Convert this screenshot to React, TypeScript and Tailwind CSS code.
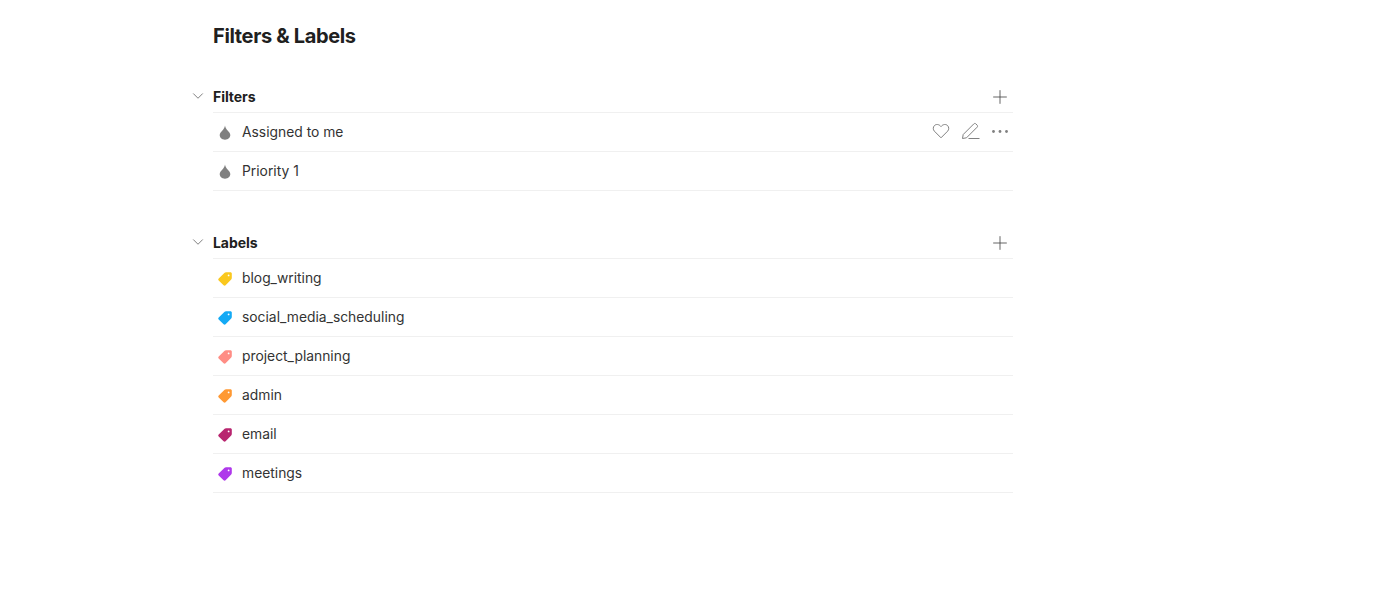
import { ChevronDown, Plus } from "lucide-react";

const labels = [
  { name: "blog_writing", color: "#fac81e" },
  { name: "social_media_scheduling", color: "#14aaf5" },
  { name: "project_planning", color: "#ff8d85" },
  { name: "admin", color: "#ff9933" },
  { name: "email", color: "#b8256f" },
  { name: "meetings", color: "#af38eb" },
];

function DropIcon() {
  return (
    <svg width="12" height="15" viewBox="0 0 12 15" fill="#808080" className="mt-[1px]">
      <path d="M6 0.5C6.3 2.6 7.4 4 8.6 5.5C9.7 6.9 11.3 8.2 11.3 10C11.3 12.7 9 14.7 6 14.7C3 14.7 0.7 12.7 0.7 10C0.7 8.2 2.3 6.9 3.4 5.5C4.6 4 5.7 2.6 6 0.5Z" />
    </svg>
  );
}

function TagIcon({ color }: { color: string }) {
  return (
    <svg width="14" height="14" viewBox="0 0 14 14" className="mt-[2px]">
      <path
        d="M8 0.2H12.4C13.2 0.2 13.8 0.8 13.8 1.6V6C13.8 6.6 13.6 7 13.2 7.4L7.6 13.2C7 13.8 6.2 13.8 5.6 13.2L0.7 8.4C0.1 7.8 0.1 7 0.7 6.4L6.6 0.8C7 0.4 7.4 0.2 8 0.2Z"
        fill={color}
      />
      <circle cx="10.6" cy="3.4" r="0.9" fill="#fff" />
    </svg>
  );
}

function Row({ icon, name, actions }: { icon: React.ReactNode; name: string; actions?: boolean }) {
  return (
    <div className="flex h-[39px] items-center border-b border-[#f0f0f0] pl-[5px] text-[13.85px] leading-[20px] text-[#333333]">
      <span className="flex w-[14px] justify-center">{icon}</span>
      <span className="ml-[10px] flex-1">{name}</span>
      {actions && (
        <div className="flex items-center gap-[8px] pr-[3px] pb-[2px] text-[#808080]">
          <svg width="20" height="20" viewBox="0 0 20 20" fill="none" stroke="currentColor" strokeWidth="1">
            <path d="M10 16.8L3.4 10.2C1.8 8.5 2 6 3.4 4.6C5 3 8 3 10 5.6C12 3 15 3 16.6 4.6C18 6 18.2 8.5 16.6 10.2L10 16.8Z" strokeLinejoin="round" />
          </svg>
          <svg width="23" height="20" viewBox="0 0 23 20" fill="none" stroke="currentColor" strokeWidth="1">
            <path d="M3.5 17.5L4.2 13.5L14.8 2.9C15.4 2.3 16.3 2.3 16.9 2.9L18.1 4.1C18.7 4.7 18.7 5.6 18.1 6.2L7.5 16.8L3.5 17.5Z" strokeLinejoin="round" />
            <path d="M9.5 17.5H20.5" />
          </svg>
          <svg width="20" height="20" viewBox="0 0 20 20" fill="currentColor">
            <circle cx="3.5" cy="10.5" r="1.4" />
            <circle cx="10" cy="10.5" r="1.4" />
            <circle cx="16.5" cy="10.5" r="1.4" />
          </svg>
        </div>
      )}
    </div>
  );
}

function Section({ title, children }: { title: string; children: React.ReactNode }) {
  return (
    <section className="relative">
      <div className="flex h-[32px] items-center justify-between border-b border-[#f0f0f0]">
        <ChevronDown size={18} strokeWidth={1} color="#555555" className="absolute left-[-24px] top-[6px]" />
        <h2 className="pb-px text-[14px] font-bold tracking-[-0.05px] text-[#202020]">{title}</h2>
        <Plus size={22} strokeWidth={0.9} color="#444444" className="mr-[2px]" />
      </div>
      {children}
    </section>
  );
}

export default function App() {
  return (
    <div className="h-[590px] w-[1382px] bg-white font-['Inter',sans-serif]">
      <div className="ml-[213px] w-[800px] pt-[22px]">
        <h1 className="h-[59px] text-[20px] leading-[28px] font-bold tracking-[-0.35px] text-[#202020]">Filters &amp; Labels</h1>
        <Section title="Filters">
          <Row icon={<DropIcon />} name="Assigned to me" actions />
          <Row icon={<DropIcon />} name="Priority 1" />
        </Section>
        <div className="h-[36px]" />
        <Section title="Labels">
          {labels.map((l) => (
            <Row key={l.name} icon={<TagIcon color={l.color} />} name={l.name} />
          ))}
        </Section>
      </div>
    </div>
  );
}
